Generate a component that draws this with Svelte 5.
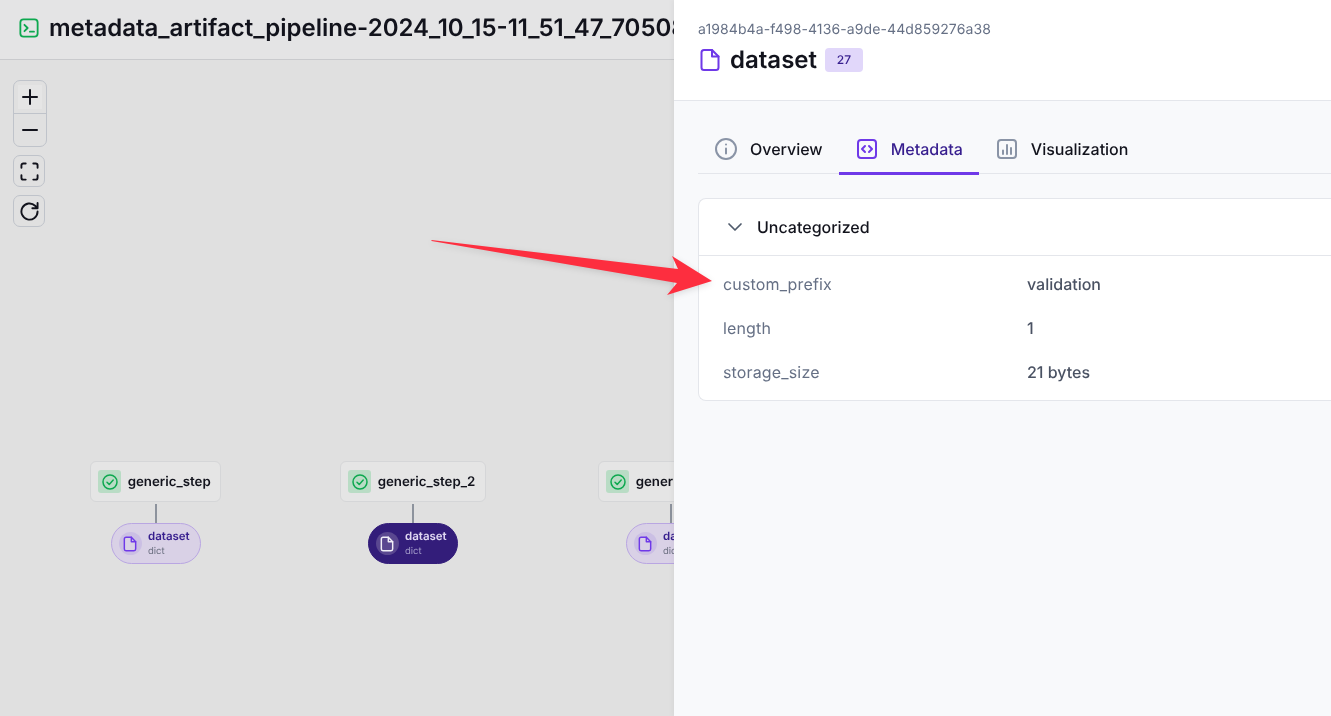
<script>
  const nodes = [
    { name: "generic_step", x: 90, w: 131, art: 111, selected: false },
    { name: "generic_step_2", x: 340, w: 146, art: 368, selected: true },
    { name: "generic_step_3", x: 598, w: 131, art: 626, selected: false },
  ];
  const rows = [
    ["custom_prefix", "validation"],
    ["length", "1"],
    ["storage_size", "21 bytes"],
  ];
  const filePath = "M14 2H6a2.500 2.500 0 0 0-2.500 2.500v15A2.500 2.500 0 0 0 6 22h12a2.500 2.500 0 0 0 2.500-2.500V8.500z";
  const foldPath = "M14 2v6.500h6.500";
</script>

<div class="page">
  <main class="left">
    <header class="topbar">
      <svg class="term" viewBox="0 0 22 22" fill="none" stroke="#0da84f" stroke-width="2" stroke-linecap="round" stroke-linejoin="round">
        <rect x="1.500" y="1.500" width="19" height="19" rx="3.500" />
        <path d="M6 7.500l3.500 3.500L6 14.500M12 15h4.500" />
      </svg>
      <h1>metadata_artifact_pipeline-2024_10_15-11_51_47_705080</h1>
    </header>

    <div class="canvas">
      <div class="controls">
        <div class="zoom-group">
          <button class="ctl active" aria-label="zoom in">
            <svg viewBox="0 0 16 16"><path d="M8 1v14M1 8h14" /></svg>
          </button>
          <button class="ctl minus" aria-label="zoom out">
            <svg viewBox="0 0 16 16"><path d="M1 8h14" /></svg>
          </button>
        </div>
        <button class="ctl single" aria-label="fit view">
          <svg viewBox="0 0 20 20">
            <path d="M1.500 6V3.500a2 2 0 0 1 2-2H6M14 1.500h2.500a2 2 0 0 1 2 2V6M18.500 14v2.500a2 2 0 0 1-2 2H14M6 18.500H3.500a2 2 0 0 1-2-2V14" />
          </svg>
        </button>
        <button class="ctl single" aria-label="reset">
          <svg viewBox="0 0 20 20">
            <path d="M18.500 10a8.500 8.500 0 1 1-2.600-6.100L18.500 6.500M18.500 1v5.500H13" />
          </svg>
        </button>
      </div>

      {#each nodes as n}
        <div class="step" style="left: {n.x}px; width: {n.w}px">
          <span class="check">
            <svg viewBox="0 0 18 18" fill="none" stroke="#0da84f" stroke-width="1.500" stroke-linecap="round" stroke-linejoin="round">
              <circle cx="9" cy="9" r="7" />
              <path d="M6 9.200l2.200 2.200L12.200 7" />
            </svg>
          </span>
          <span class="step-name">{n.name}</span>
        </div>
        <div class="edge" style="left: {n.art + 44}px"></div>
        <div class="artifact" class:selected={n.selected} style="left: {n.art}px">
          <span class="art-icon">
            <svg viewBox="0 0 24 24">
              <path class="page-fill" d={filePath} />
              <path class="page-line" d={foldPath} />
            </svg>
          </span>
          <span class="art-text">
            <span class="art-name">dataset</span>
            <span class="art-type">dict</span>
          </span>
        </div>
      {/each}
    </div>
  </main>

  <aside class="panel">
    <div class="panel-head">
      <div class="uuid">a1984b4a-f498-4136-a9de-44d859276a38</div>
      <div class="title-row">
        <svg class="title-icon" viewBox="0 0 24 24" fill="none" stroke="#6f39e8" stroke-width="2" stroke-linecap="round" stroke-linejoin="round">
          <path d={filePath} />
          <path d={foldPath} />
        </svg>
        <span class="title">dataset</span>
        <span class="badge">27</span>
      </div>
    </div>

    <div class="panel-body">
      <nav class="tabs">
        <div class="tab">
          <svg viewBox="0 0 24 24" fill="none" stroke="#8a94a6" stroke-width="2" stroke-linecap="round">
            <circle cx="12" cy="12" r="10" />
            <path d="M12 11.500v5M12 7.500h.01" />
          </svg>
          Overview
        </div>
        <div class="tab current">
          <svg viewBox="0 0 24 24" fill="none" stroke="#6f39e8" stroke-width="2" stroke-linecap="round" stroke-linejoin="round">
            <rect x="3" y="3" width="18" height="18" rx="3" />
            <path d="M10 9l-3 3 3 3M14 9l3 3-3 3" />
          </svg>
          Metadata
        </div>
        <div class="tab">
          <svg viewBox="0 0 24 24" fill="none" stroke="#8a94a6" stroke-width="2" stroke-linecap="round" stroke-linejoin="round">
            <rect x="3" y="3" width="18" height="18" rx="3" />
            <path d="M8 17v-3.500M12 17V8M16 17v-6" />
          </svg>
          Visualization
        </div>
      </nav>

      <section class="card">
        <div class="card-head">
          <svg viewBox="0 0 16 16" fill="none" stroke="#4f5a6b" stroke-width="1.700" stroke-linecap="round" stroke-linejoin="round">
            <path d="M2 5l6 6 6-6" />
          </svg>
          Uncategorized
        </div>
        <div class="card-rows">
          {#each rows as [k, v]}
            <div class="row">
              <span class="key">{k}</span>
              <span class="val">{v}</span>
            </div>
          {/each}
        </div>
      </section>
    </div>
  </aside>

  <svg class="arrow" width="300" height="70" viewBox="0 0 300 70">
    <path d="M1.500 0L248 29 242 16 282 41 237 55 247 43 1.500 1z" fill="#fd2e3f" />
  </svg>
</div>

<style>
  :global(body) {
    margin: 0;
    font-family: Inter, "Liberation Sans", sans-serif;
    color: #12131c;
    text-rendering: geometricPrecision;
  }

  .page {
    position: relative;
    width: 1331px;
    height: 716px;
    overflow: hidden;
    background: #e0e0e0;
    opacity: 0.999;
  }

  .left {
    display: flex;
    flex-direction: column;
    height: 100%;
  }

  .topbar {
    display: flex;
    align-items: center;
    gap: 10px;
    padding: 0 0 3px 19px;
    height: 56px;
    flex-shrink: 0;
    background: #e4e4e5;
    border-bottom: 1px solid #c9cacd;
    white-space: nowrap;
  }

  .term {
    width: 20px;
    height: 20px;
  }

  h1 {
    margin: 0;
    font-size: 24px;
    font-weight: 600;
    line-height: 32px;
  }

  .canvas {
    position: relative;
    flex: 1;
  }

  .controls {
    position: absolute;
    left: 13px;
    top: 20px;
    display: flex;
    flex-direction: column;
    align-items: flex-start;
    gap: 8px;
  }

  .zoom-group {
    display: flex;
    flex-direction: column;
    width: 34px;
    height: 67px;
    box-sizing: border-box;
    border: 1px solid #bfc3ca;
    border-radius: 7px;
  }

  .ctl {
    display: flex;
    align-items: center;
    justify-content: center;
    padding: 0;
    background: none;
    border: none;
  }

  .ctl svg {
    fill: none;
    stroke: #12131c;
    stroke-width: 2;
    stroke-linecap: round;
    stroke-linejoin: round;
  }

  .zoom-group .ctl {
    flex: 1;
  }

  .zoom-group .ctl svg {
    width: 16px;
    height: 16px;
  }

  .ctl.active {
    border-bottom: 1px solid #bfc3ca;
    background: linear-gradient(#e5e5e5, #e5e5e5) center / 24px 24px no-repeat;
  }

  .ctl.single {
    width: 32px;
    height: 32px;
    box-sizing: border-box;
    border: 1px solid #bfc3ca;
    border-radius: 7px;
  }

  .ctl.single svg {
    width: 19px;
    height: 19px;
  }

  .step {
    position: absolute;
    top: 401px;
    height: 41px;
    box-sizing: border-box;
    display: flex;
    align-items: center;
    gap: 6.700px;
    padding-left: 7px;
    background: #e5e5e5;
    border: 1px solid #d5d6d8;
    border-radius: 6px;
    white-space: nowrap;
  }

  .check {
    display: flex;
    align-items: center;
    justify-content: center;
    width: 23px;
    height: 23px;
    flex-shrink: 0;
    background: #b9dcc5;
    border-radius: 3px;
  }

  .check svg {
    width: 18px;
    height: 18px;
  }

  .step-name {
    font-size: 13.300px;
    font-weight: 600;
  }

  .edge {
    position: absolute;
    top: 444px;
    width: 2px;
    height: 20px;
    background: #8d939d;
  }

  .artifact {
    position: absolute;
    top: 463px;
    width: 89.500px;
    height: 41px;
    box-sizing: border-box;
    display: flex;
    align-items: center;
    gap: 6.500px;
    padding-left: 6.500px;
    background: #d9d1e6;
    border: 1px solid #b9a6e2;
    border-radius: 21px;
    color: #371e8e;
  }

  .artifact.selected {
    background: #331d7a;
    border-color: #331d7a;
    color: #e0d8f2;
  }

  .art-icon {
    display: flex;
    align-items: center;
    justify-content: center;
    width: 23px;
    height: 23px;
    flex-shrink: 0;
    border-radius: 50%;
    background: #cbbfe4;
  }

  .selected .art-icon {
    background: #5a4790;
  }

  .art-icon svg {
    width: 16px;
    height: 16px;
    fill: none;
    stroke-width: 2.200;
    stroke-linecap: round;
    stroke-linejoin: round;
  }

  .page-fill {
    fill: #d9d1e6;
    stroke: #6f39e8;
  }

  .page-line {
    stroke: #6f39e8;
  }

  .selected .page-fill {
    fill: #5a4790;
    stroke: #f2eff8;
  }

  .selected .page-line {
    stroke: #f2eff8;
  }

  .art-text {
    display: flex;
    flex-direction: column;
    padding-top: 2px;
  }

  .art-name {
    font-size: 11.500px;
    font-weight: 600;
    line-height: 15px;
  }

  .art-type {
    font-size: 9.500px;
    line-height: 16px;
    color: #6b6f80;
  }

  .selected .art-type {
    color: #a49cca;
  }

  .panel {
    position: absolute;
    left: 674px;
    top: 0;
    width: 657px;
    height: 716px;
    display: flex;
    flex-direction: column;
    background: #f8f9fb;
    box-shadow: -2px 0 5px rgba(0, 0, 0, 0.04);
  }

  .panel-head {
    height: 101px;
    flex-shrink: 0;
    box-sizing: border-box;
    padding: 20px 0 0 24px;
    background: #fff;
    border-bottom: 1px solid #e4e6eb;
  }

  .uuid {
    font-size: 14px;
    line-height: 20px;
    letter-spacing: 0.11px;
    color: #667085;
  }

  .title-row {
    display: flex;
    align-items: center;
    margin-top: 4px;
  }

  .title-icon {
    width: 24px;
    height: 24px;
    margin-right: 8px;
  }

  .title {
    font-size: 24px;
    font-weight: 600;
    line-height: 32px;
    margin-right: 8px;
  }

  .badge {
    width: 38px;
    height: 24px;
    line-height: 24px;
    text-align: center;
    font-size: 12px;
    font-weight: 500;
    color: #371e8e;
    background: #e1d7fa;
    border-radius: 4px;
  }

  .panel-body {
    padding: 23px 0 0 24px;
  }

  .tabs {
    display: flex;
    height: 50px;
    box-sizing: border-box;
    border-bottom: 1px solid #e4e6eb;
  }

  .tab {
    display: flex;
    align-items: center;
    gap: 12px;
    padding: 0 16px;
    height: 50px;
    box-sizing: border-box;
    font-size: 16px;
    font-weight: 500;
  }

  .tab svg {
    width: 24px;
    height: 24px;
  }

  .tab.current {
    height: 51px;
    padding-top: 2px;
    color: #371e8e;
    border-bottom: 3px solid #6f39e8;
  }

  .card {
    margin-top: 24px;
    background: #fff;
    border: 1px solid #e4e6eb;
    border-right: none;
    border-radius: 8px 0 0 8px;
  }

  .card-head {
    display: flex;
    align-items: center;
    gap: 14px;
    height: 56px;
    padding-left: 28px;
    font-size: 16px;
    font-weight: 500;
    border-bottom: 1px solid #e4e6eb;
  }

  .card-head svg {
    width: 16px;
    height: 16px;
  }

  .card-rows {
    padding: 6px 24px;
  }

  .row {
    display: flex;
    align-items: center;
    height: 44px;
    font-size: 16px;
  }

  .key {
    width: 304px;
    letter-spacing: 0.15px;
    color: #667085;
  }

  .val {
    font-weight: 500;
    color: #4a5263;
  }

  .arrow {
    position: absolute;
    left: 430px;
    top: 240px;
    filter: drop-shadow(0 2px 3px rgba(0, 0, 0, 0.12));
  }
</style>
